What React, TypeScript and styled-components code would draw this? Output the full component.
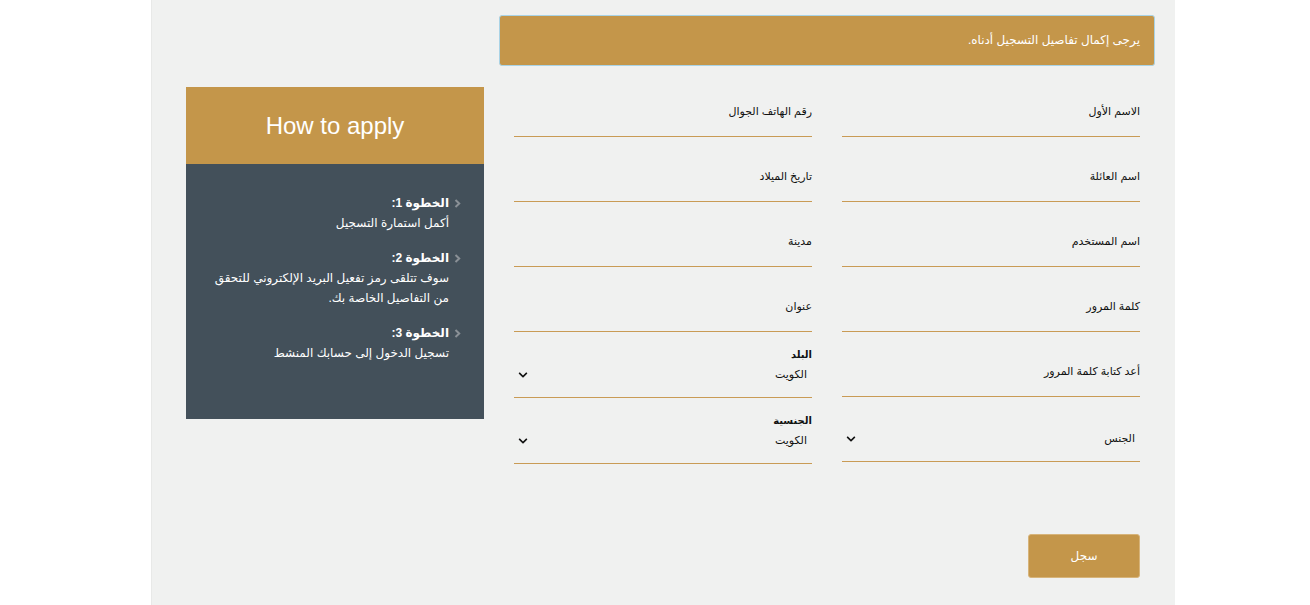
import styled, { createGlobalStyle } from "styled-components";
import { FaChevronDown } from "react-icons/fa";

const gold = "#c4964a";
const lineGold = "#c99b55";

const GlobalStyle = createGlobalStyle`
  html, body { margin: 0; padding: 0; background: #fff; }
  body {
    font-family: "Liberation Sans", Arial, "DejaVu Sans", sans-serif;
    color: #111;
  }
`;

const Page = styled.div`
  width: 1024px;
  min-height: 605px;
  margin-left: 151px;
  background: #f0f1f0;
  border-left: 1px solid #e8e9e8;
  box-sizing: border-box;
  padding: 15px 20px 40px 19px;
`;

const Row = styled.div`
  display: flex;
  flex-direction: row-reverse;
  align-items: flex-start;
`;

const SideCol = styled.div`
  width: 328px;
  padding: 72px 15px 0;
  box-sizing: border-box;
`;

const MainCol = styled.div`
  width: 656px;
  direction: rtl;
`;

const Alert = styled.div`
  height: 51px;
  box-sizing: border-box;
  background: ${gold};
  border: 1px solid #a9d3e6;
  border-radius: 3px;
  color: #fff;
  font-size: 12px;
  display: flex;
  align-items: center;
  padding: 0 14px 1px;
`;

const FormGrid = styled.div`
  display: flex;
  padding-top: 6px;
`;

const Column = styled.div`
  width: 328px;
  padding: 0 15px;
  box-sizing: border-box;
  display: flex;
  flex-direction: column;
`;

const Field = styled.div<{ $h?: number }>`
  height: ${({ $h }) => $h ?? 65}px;
  display: flex;
  flex-direction: column;
  justify-content: flex-end;
`;

const Label = styled.label`
  font-size: 11px;
  line-height: 14px;
  color: #111;
`;

const SmallLabel = styled.label`
  font-size: 10px;
  font-weight: bold;
  line-height: 13px;
  color: #111;
`;

const Input = styled.div`
  height: 18px;
  border-bottom: 1px solid ${lineGold};
`;

const Select = styled.div`
  height: 37px;
  border-bottom: 1px solid ${lineGold};
  display: flex;
  justify-content: space-between;
  align-items: flex-start;
  padding: 6px 5px 0 4px;
  box-sizing: border-box;
  font-size: 11px;
  line-height: 14px;
  color: #111;

  svg {
    margin-top: 3px;
    color: #111;
  }
`;

const Actions = styled.div`
  display: flex;
  padding: 70px 15px 0;
`;

const SubmitButton = styled.button`
  width: 112px;
  height: 44px;
  background: ${gold};
  border: 1px solid #d7b47a;
  border-radius: 3px;
  color: #fff;
  font-family: inherit;
  font-size: 12px;
  cursor: pointer;
`;

const Panel = styled.div`
  width: 298px;
  background: #43505a;
`;

const PanelHeader = styled.div`
  height: 77px;
  background: ${gold};
  color: #fff;
  font-size: 24px;
  display: flex;
  align-items: center;
  justify-content: center;
`;

const StepList = styled.ul`
  list-style: none;
  margin: 0;
  padding: 29px 23px 56px 12px;
  direction: rtl;
  color: #fff;
`;

const Step = styled.li`
  display: flex;
  gap: 5px;
  & + & {
    margin-top: 15px;
  }
`;

const Bullet = styled.svg`
  flex: none;
  margin-top: 6px;
  width: 7px;
  height: 9px;
`;

const StepBody = styled.div`
  font-size: 12px;
  line-height: 20px;
`;

const StepTitle = styled.div`
  font-weight: bold;
`;

type FieldDef = { label?: string; select?: string; small?: boolean; h?: number };

const rightFields: FieldDef[] = [
  { label: "الاسم الأول" },
  { label: "اسم العائلة" },
  { label: "اسم المستخدم" },
  { label: "كلمة المرور" },
  { label: "أعد كتابة كلمة المرور" },
  { select: "الجنس" },
];

const leftFields: FieldDef[] = [
  { label: "رقم الهاتف الجوال" },
  { label: "تاريخ الميلاد" },
  { label: "مدينة" },
  { label: "عنوان" },
  { label: "البلد", select: "الكويت", small: true, h: 66 },
  { label: "الجنسية", select: "الكويت", small: true, h: 66 },
];

const steps = [
  { title: "الخطوة 1:", text: "أكمل استمارة التسجيل" },
  {
    title: "الخطوة 2:",
    text: "سوف تتلقى رمز تفعيل البريد الإلكتروني للتحقق من التفاصيل الخاصة بك.",
  },
  { title: "الخطوة 3:", text: "تسجيل الدخول إلى حسابك المنشط" },
];

function FormField({ f }: { f: FieldDef }) {
  if (f.select) {
    return (
      <Field $h={f.h}>
        {f.label && <SmallLabel>{f.label}</SmallLabel>}
        <Select>
          <span>{f.select}</span>
          <FaChevronDown size={10} />
        </Select>
      </Field>
    );
  }
  return (
    <Field $h={f.h}>
      <Label>{f.label}</Label>
      <Input />
    </Field>
  );
}

export default function App() {
  return (
    <>
      <GlobalStyle />
      <Page>
        <Row>
          <MainCol>
            <Alert>يرجى إكمال تفاصيل التسجيل أدناه.</Alert>
            <FormGrid>
              <Column>
                {rightFields.map((f, i) => (
                  <FormField key={i} f={f} />
                ))}
              </Column>
              <Column>
                {leftFields.map((f, i) => (
                  <FormField key={i} f={f} />
                ))}
              </Column>
            </FormGrid>
            <Actions>
              <SubmitButton>سجل</SubmitButton>
            </Actions>
          </MainCol>
          <SideCol>
            <Panel>
              <PanelHeader>How to apply</PanelHeader>
              <StepList>
                {steps.map((s) => (
                  <Step key={s.title}>
                    <Bullet viewBox="0 0 7 9">
                      <polyline
                        points="1.5,1 5.2,4.5 1.5,8"
                        fill="none"
                        stroke="#8a9096"
                        strokeWidth="2"
                      />
                    </Bullet>
                    <StepBody>
                      <StepTitle>{s.title}</StepTitle>
                      <div>{s.text}</div>
                    </StepBody>
                  </Step>
                ))}
              </StepList>
            </Panel>
          </SideCol>
        </Row>
      </Page>
    </>
  );
}
